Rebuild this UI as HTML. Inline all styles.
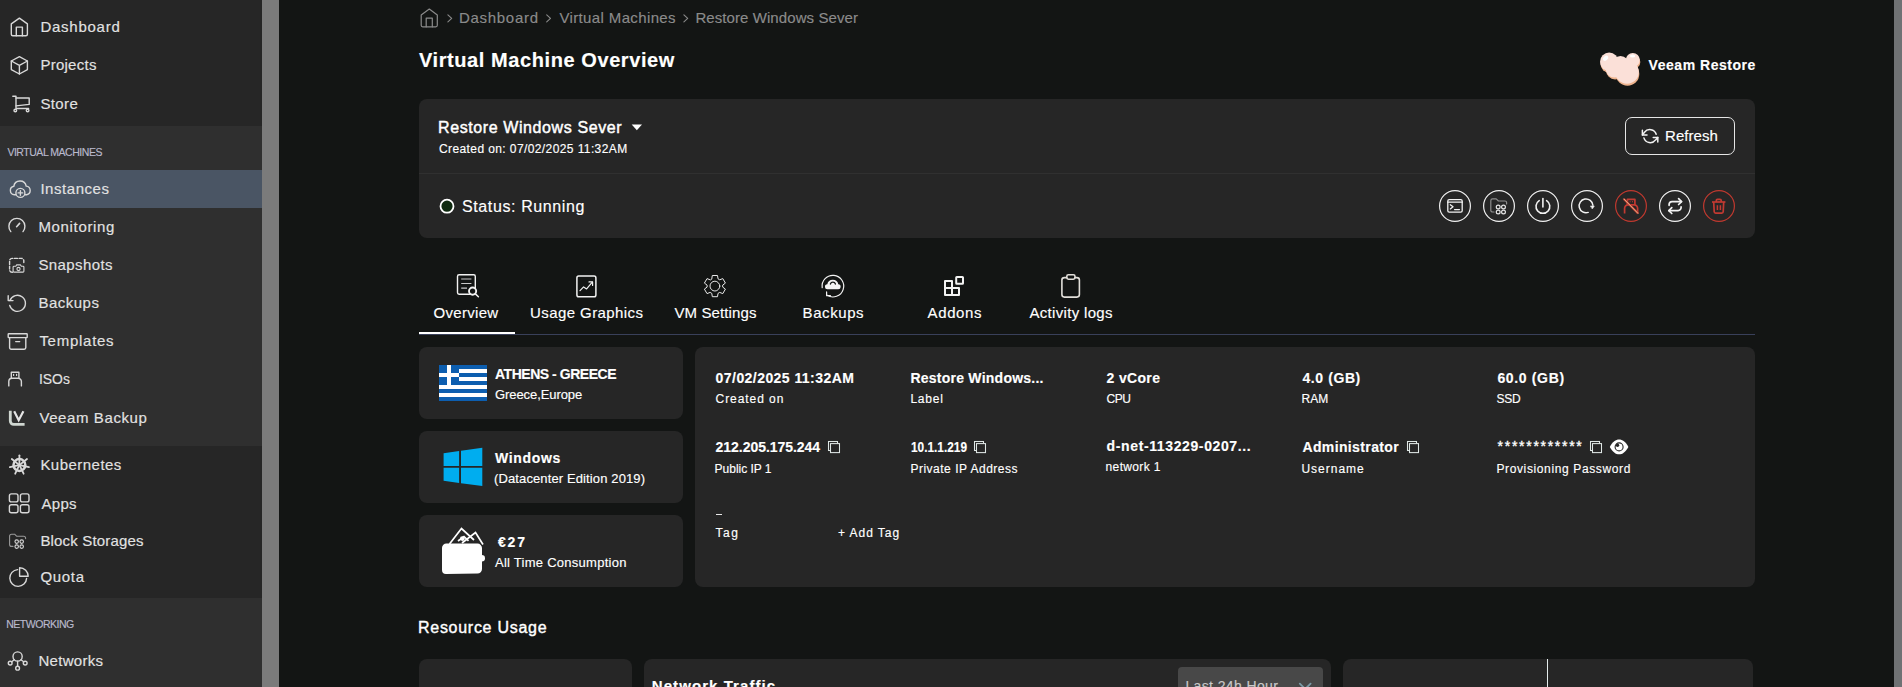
<!DOCTYPE html>
<html lang="en">
<head>
<meta charset="utf-8">
<title>Virtual Machine Overview</title>
<style>
html,body{margin:0;padding:0;background:#131514;}
body{width:1902px;height:687px;overflow:hidden;position:relative;font-family:"Liberation Sans", sans-serif;color:#fff;}
.a{position:absolute;display:block;margin:0;padding:0;}
.t{white-space:pre;font-weight:400;-webkit-text-stroke:0.15px currentColor;}
.i{fill:none;stroke:#d8d8d8;stroke-width:1.4;stroke-linecap:round;stroke-linejoin:round;overflow:visible;}
.f{overflow:visible;}

</style>
</head>
<body>
<aside>
<div class="a" style="left:0px;top:0px;width:262px;height:687px;background:#2f2f2f;"></div>
<div class="a" style="left:0px;top:0px;width:262px;height:126px;background:#262626;"></div>
<div class="a" style="left:0px;top:446px;width:262px;height:152px;background:#262626;"></div>
<div class="a" style="left:0px;top:170px;width:262px;height:38px;background:#4a5564;"></div>
<div class="a" style="left:262px;top:0px;width:17px;height:687px;background:#7b7b7b;"></div>
<svg class="a i" style="left:9px;top:16px" width="21" height="22" viewBox="9 16 21 22"><path d="M11.3 23.9 L19.4 18.1 L27.4 23.9 V34.3 a1.5 1.5 0 0 1 -1.5 1.5 H12.8 a1.5 1.5 0 0 1 -1.5 -1.5 Z"/><path d="M16.3 35.8 V27.1 H22.4 V35.8"/></svg>
<svg class="a i" style="left:9px;top:55px" width="21" height="21" viewBox="9 55 21 21"><path d="M19.4 56.6 L27.4 61 V69.6 L19.4 74 L11.3 69.6 V61 Z"/><path d="M11.3 61 L19.4 65.4 L27.4 61 M19.4 65.4 V74"/></svg>
<svg class="a i" style="left:11px;top:94px" width="21" height="20" viewBox="11 94 21 20"><path d="M12.8 96.3 H16 V108.5 H28.6"/><path d="M16 98 H29.2 V104.4 L16 105.9"/><circle cx="15.3" cy="110.5" r="1.3"/><circle cx="27.6" cy="110.5" r="1.3"/></svg>
<svg class="a i" style="left:8px;top:179px" width="25" height="21" viewBox="8 179 25 21"><path d="M15.6 194.8 H14.4 a4.3 4.3 0 0 1 -0.6 -8.5 a6.3 6.3 0 0 1 12.4 -0.2 a4.4 4.4 0 0 1 0.4 8.7 H25.2"/><circle cx="20.4" cy="192.9" r="4.5"/><path d="M20.4 190.6 V195.2 M18.1 192.9 H22.7"/></svg>
<svg class="a i" style="left:7px;top:218px" width="20" height="16" viewBox="7 218 20 16"><path d="M10.8 231.6 A8 8 0 1 1 23 231.6"/><path d="M16.6 226.7 L19.6 223.4" stroke-width="1.6"/></svg>
<svg class="a i" style="left:8px;top:256px" width="18" height="18" viewBox="8 256 18 18"><path d="M12.5 272.3 H12 a2.4 2.4 0 0 1 -2.4 -2.4 V260.8 a2.4 2.4 0 0 1 2.4 -2.4 H21.4 a2.4 2.4 0 0 1 2.4 2.4 V262.5" stroke-dasharray="3 1.7"/><path d="M14 266.2 H15.8 L16.7 264.9 H20.4 L21.3 266.2 H23 a0.9 0.9 0 0 1 0.9 0.9 V271.2 a0.9 0.9 0 0 1 -0.9 0.9 H14 a0.9 0.9 0 0 1 -0.9 -0.9 V267.1 a0.9 0.9 0 0 1 0.9 -0.9 Z" stroke-width="1.1"/><circle cx="18.5" cy="269" r="1.6" stroke-width="1.1"/></svg>
<svg class="a i" style="left:6px;top:294px" width="21" height="19" viewBox="6 294 21 19"><path d="M9.9 300.6 A8 8 0 1 1 9.7 305.4"/><path d="M8.2 295.8 V300.6 H13"/></svg>
<svg class="a i" style="left:6px;top:332px" width="23" height="19" viewBox="6 332 23 19"><rect x="8.2" y="333.7" width="19" height="3.9" rx="0.6"/><path d="M9.6 337.6 V347.6 a1.6 1.6 0 0 0 1.6 1.6 H24.2 a1.6 1.6 0 0 0 1.6 -1.6 V337.6"/><path d="M15.7 341.6 H19.7"/></svg>
<svg class="a i" style="left:7px;top:370px" width="17" height="18" viewBox="7 370 17 18"><path d="M8.8 385.9 V381.6 a3.3 3.3 0 0 1 3.3 -3.3 H18.1 a3.3 3.3 0 0 1 3.3 3.3 V385.9"/><path d="M11.3 378.3 V372.3 H18.9 V378.3"/><path d="M13.6 374.3 V375.5 M16.6 374.3 V375.5" stroke-width="1.2"/></svg>
<svg class="a i" style="left:8px;top:409px" width="18" height="18" viewBox="8 409 18 18"><path d="M10.3 410.7 V421 a3.4 3.4 0 0 0 3.4 3.4 H24.6" stroke="#cfd6d0" stroke-width="2.8" stroke-linecap="butt"/><path d="M14.2 411.2 L18.7 420.2 L23.4 411.2" stroke="#e6e6e6" stroke-width="2.2" stroke-linecap="butt" stroke-linejoin="miter"/></svg>
<svg class="a i" style="left:8px;top:454px" width="23" height="23" viewBox="8 454 23 23"><circle cx="19.4" cy="465" r="5.9" stroke-width="2.5"/><circle cx="19.4" cy="465" r="1.6" fill="#e0e0e0" stroke="none"/><path d="M19.4 463.5 L19.4 455.3" stroke-width="1.8"/><path d="M20.6 464.1 L27.0 459.0" stroke-width="1.8"/><path d="M20.9 465.3 L28.9 467.2" stroke-width="1.8"/><path d="M20.1 466.4 L23.6 473.7" stroke-width="1.8"/><path d="M18.7 466.4 L15.2 473.7" stroke-width="1.8"/><path d="M17.9 465.3 L9.9 467.2" stroke-width="1.8"/><path d="M18.2 464.1 L11.8 459.0" stroke-width="1.8"/></svg>
<svg class="a i" style="left:7px;top:492px" width="24" height="23" viewBox="7 492 24 23"><rect x="9.4" y="493.9" width="8.6" height="8" rx="2"/><rect x="9.4" y="504.7" width="8.6" height="8" rx="2"/><rect x="20.4" y="493.9" width="8.6" height="8" rx="2"/><rect x="20.4" y="504.7" width="8.6" height="8" rx="2"/></svg>
<svg class="a i" style="left:8px;top:532px" width="20" height="19" viewBox="8 532 20 19"><path d="M13 546.4 H11.6 a2 2 0 0 1 -2 -2 V536.2 a2 2 0 0 1 2 -2 H14.6 L16.8 536.3 H23.6 a2 2 0 0 1 2 2 V538.6" stroke="#9a9a9a" stroke-width="1.1"/><circle cx="16.7" cy="541.6" r="1.75" stroke-width="1.1"/><circle cx="16.7" cy="546.6" r="1.75" stroke-width="1.1"/><circle cx="21.7" cy="541.6" r="1.75" stroke-width="1.1"/><circle cx="21.7" cy="546.6" r="1.75" stroke-width="1.1"/></svg>
<svg class="a i" style="left:8px;top:566px" width="22" height="22" viewBox="8 566 22 22"><path d="M17.6 569.6 A8.4 8.4 0 1 0 26.6 578.4"/><path d="M19.6 567.7 A8.6 8.6 0 0 1 28.2 576.3 H19.6 Z"/></svg>
<svg class="a i" style="left:6px;top:650px" width="23" height="22" viewBox="6 650 23 22"><circle cx="17.6" cy="656.5" r="4.6"/><circle cx="10.2" cy="663.1" r="1.9"/><circle cx="25.2" cy="663.1" r="1.9"/><circle cx="17.6" cy="668.2" r="1.9"/><path d="M17.6 661.1 V666.3 M14.3 659.8 L11.7 661.8 M20.9 659.8 L23.7 661.8"/></svg>
<span class="a t" style="left:40.4px;top:19px;font-size:15px;line-height:15px;letter-spacing:0.75px;color:#e2e2e2;">Dashboard</span>
<span class="a t" style="left:40.4px;top:57.4px;font-size:15px;line-height:15px;letter-spacing:0.26px;color:#e2e2e2;">Projects</span>
<span class="a t" style="left:40.4px;top:96.2px;font-size:15px;line-height:15px;letter-spacing:0.4px;color:#e2e2e2;">Store</span>
<span class="a t" style="left:7.4px;top:147.4px;font-size:10.5px;line-height:10.5px;letter-spacing:-0.47px;color:#b9b9cc;">VIRTUAL MACHINES</span>
<span class="a t" style="left:40.4px;top:181.4px;font-size:15px;line-height:15px;letter-spacing:0.55px;color:#e2e2e2;">Instances</span>
<span class="a t" style="left:38.4px;top:219.4px;font-size:15px;line-height:15px;letter-spacing:0.67px;color:#e2e2e2;">Monitoring</span>
<span class="a t" style="left:38.4px;top:257.4px;font-size:15px;line-height:15px;letter-spacing:0.4px;color:#e2e2e2;">Snapshots</span>
<span class="a t" style="left:38.4px;top:295.4px;font-size:15px;line-height:15px;letter-spacing:0.5px;color:#e2e2e2;">Backups</span>
<span class="a t" style="left:39.4px;top:333.4px;font-size:15px;line-height:15px;letter-spacing:0.73px;color:#e2e2e2;">Templates</span>
<span class="a t" style="left:38.5px;top:371.4px;font-size:15px;line-height:15px;transform:scaleX(0.925);transform-origin:0 0;color:#e2e2e2;">ISOs</span>
<span class="a t" style="left:39.4px;top:410.2px;font-size:15px;line-height:15px;letter-spacing:0.6px;color:#e2e2e2;">Veeam Backup</span>
<span class="a t" style="left:40.4px;top:457.4px;font-size:15px;line-height:15px;letter-spacing:0.47px;color:#e2e2e2;">Kubernetes</span>
<span class="a t" style="left:41.4px;top:495.6px;font-size:15px;line-height:15px;letter-spacing:0.33px;color:#e2e2e2;">Apps</span>
<span class="a t" style="left:40.4px;top:533px;font-size:15px;line-height:15px;letter-spacing:0.17px;color:#e2e2e2;">Block Storages</span>
<span class="a t" style="left:40.4px;top:569.4px;font-size:15px;line-height:15px;letter-spacing:0.7px;color:#e2e2e2;">Quota</span>
<span class="a t" style="left:6.2px;top:619.4px;font-size:10.5px;line-height:10.5px;letter-spacing:-0.47px;color:#b9b9cc;">NETWORKING</span>
<span class="a t" style="left:38.4px;top:653px;font-size:15px;line-height:15px;letter-spacing:0.31px;color:#e2e2e2;">Networks</span>
</aside>
<main>
<div class="a" style="left:1894px;top:0px;width:8px;height:687px;background:#707274;"></div>
<div class="a" style="left:419px;top:99px;width:1336px;height:139px;background:#262626;border-radius:8px;"></div>
<div class="a" style="left:419px;top:173px;width:1336px;height:1px;background:#303030;"></div>
<div class="a" style="left:1625px;top:117px;width:110.3px;height:38.2px;border-radius:7px;border:1px solid #e6e6e6;box-sizing:border-box;"></div>
<div class="a" style="left:419px;top:334px;width:1336px;height:1px;background:#39405a;"></div>
<div class="a" style="left:419px;top:332px;width:96px;height:2.4px;background:#ffffff;"></div>
<div class="a" style="left:419px;top:347px;width:264.4px;height:72px;background:#262626;border-radius:8px;"></div>
<div class="a" style="left:419px;top:431px;width:264.4px;height:72px;background:#262626;border-radius:8px;"></div>
<div class="a" style="left:419px;top:515px;width:264.4px;height:72px;background:#262626;border-radius:8px;"></div>
<div class="a" style="left:695px;top:347px;width:1060px;height:240px;background:#262626;border-radius:8px;"></div>
<div class="a" style="left:716px;top:514px;width:5.5px;height:1.2px;background:#e8e8e8;"></div>
<div class="a" style="left:419px;top:659px;width:213px;height:40px;background:#262626;border-radius:8px;"></div>
<div class="a" style="left:644px;top:659px;width:687px;height:40px;background:#262626;border-radius:8px;"></div>
<div class="a" style="left:1343px;top:659px;width:410px;height:40px;background:#262626;border-radius:8px;"></div>
<div class="a" style="left:1547px;top:659px;width:1.2px;height:40px;background:#e4ecec;"></div>
<div class="a" style="left:1178px;top:667px;width:145px;height:40px;background:#484848;border-radius:4px;"></div>
<svg class="a f" style="left:438px;top:197px" width="18" height="18" viewBox="438 197 18 18"><circle cx="447" cy="206.2" r="6.5" fill="#0f2a10" stroke="#fff" stroke-width="1.8"/></svg>
<svg class="a f" style="left:1438px;top:189px" width="34" height="34" viewBox="1438 189 34 34"><circle cx="1455" cy="206" r="15.4" fill="none" stroke="#f0f0f0" stroke-width="1.2"/></svg>
<svg class="a f" style="left:1482px;top:189px" width="34" height="34" viewBox="1482 189 34 34"><circle cx="1499" cy="206" r="15.4" fill="none" stroke="#f0f0f0" stroke-width="1.2"/></svg>
<svg class="a f" style="left:1526px;top:189px" width="34" height="34" viewBox="1526 189 34 34"><circle cx="1543" cy="206" r="15.4" fill="none" stroke="#f0f0f0" stroke-width="1.2"/></svg>
<svg class="a f" style="left:1570px;top:189px" width="34" height="34" viewBox="1570 189 34 34"><circle cx="1587" cy="206" r="15.4" fill="none" stroke="#f0f0f0" stroke-width="1.2"/></svg>
<svg class="a f" style="left:1614px;top:189px" width="34" height="34" viewBox="1614 189 34 34"><circle cx="1631" cy="206" r="15.4" fill="none" stroke="#c0392f" stroke-width="1.2"/></svg>
<svg class="a f" style="left:1658px;top:189px" width="34" height="34" viewBox="1658 189 34 34"><circle cx="1675" cy="206" r="15.4" fill="none" stroke="#f0f0f0" stroke-width="1.2"/></svg>
<svg class="a f" style="left:1702px;top:189px" width="34" height="34" viewBox="1702 189 34 34"><circle cx="1719" cy="206" r="15.4" fill="none" stroke="#c0392f" stroke-width="1.2"/></svg>
<svg class="a i" style="left:419px;top:7px" width="21" height="22" viewBox="419 7 21 22"><g stroke="#8b8b8b" stroke-width="1.2"><path d="M421.2 14.9 L429.3 9.1 L437.3 14.9 V25.3 a1.5 1.5 0 0 1 -1.5 1.5 H422.7 a1.5 1.5 0 0 1 -1.5 -1.5 Z"/><path d="M426.2 26.8 V18.1 H432.3 V26.8"/></g></svg>
<svg class="a i" style="left:446px;top:13px" width="8" height="10" viewBox="446 13 8 10"><path d="M447.9 14.8 L451.7 18.3 L447.9 21.8" stroke="#8b8b8b" stroke-width="1.1"/></svg>
<svg class="a i" style="left:545px;top:13px" width="8" height="10" viewBox="545 13 8 10"><path d="M546.7 14.8 L550.5 18.3 L546.7 21.8" stroke="#8b8b8b" stroke-width="1.1"/></svg>
<svg class="a i" style="left:682px;top:13px" width="8" height="10" viewBox="682 13 8 10"><path d="M683.9 14.8 L687.6999999999999 18.3 L683.9 21.8" stroke="#8b8b8b" stroke-width="1.1"/></svg>
<svg class="a f" style="left:1598px;top:51px" width="44" height="36" viewBox="1598 51 44 36"><g stroke="none"><g fill="#efb48e"><circle cx="1609.7" cy="63.699999999999996" r="9.2"/><circle cx="1633.3" cy="61.9" r="7"/><circle cx="1627.5" cy="73.9" r="11.8"/><circle cx="1615.1" cy="70.5" r="9"/><circle cx="1621.0" cy="66.4" r="8.6"/></g><g fill="#fbe0d8"><circle cx="1609.2" cy="61.8" r="9.2"/><circle cx="1632.8" cy="60" r="7"/><circle cx="1627" cy="72" r="11.8"/><circle cx="1614.6" cy="68.6" r="9"/><circle cx="1620.5" cy="64.5" r="8.6"/></g><ellipse cx="1605.6" cy="58.2" rx="3" ry="2.1" fill="#fff" transform="rotate(-35 1605.6 58.2)"/><ellipse cx="1632.6" cy="56" rx="2.6" ry="1.6" fill="#fff"/></g></svg>
<svg class="a i" style="left:1640px;top:127px" width="20" height="18" viewBox="1640 127 20 18"><g stroke="#f2f2f2" stroke-width="1.5"><path d="M1656.2 134.3 A6.6 6.6 0 0 0 1644.5 132.3 L1642.4 135"/><path d="M1642.4 130.3 V135 H1647"/><path d="M1643.9 137.9 A6.6 6.6 0 0 0 1655.6 139.9 L1657.8 137.4"/><path d="M1657.8 142 V137.4 H1653.2"/></g></svg>
<svg class="a i" style="left:1446px;top:198px" width="18" height="16" viewBox="1446 198 18 16"><g stroke="#f2f2f2" stroke-width="1.3"><rect x="1447.8" y="199.6" width="14.4" height="12.6" rx="1.4"/><path d="M1447.8 202.2 H1462.2"/><path d="M1450.3 204.7 L1453 206.8 L1450.3 208.9"/><path d="M1454.6 209.6 H1459.4" stroke-width="1.4"/></g></svg>
<svg class="a i" style="left:1489px;top:197px" width="19" height="17" viewBox="1489 197 19 17"><path d="M1494 212 H1492.6 a1.8 1.8 0 0 1 -1.8 -1.8 V200.7 a1.8 1.8 0 0 1 1.8 -1.8 H1496.2 L1498.4 201 H1505 a1.6 1.6 0 0 1 1.6 1.6 V204" stroke="#8e8e8e" stroke-width="1.2"/><circle cx="1498.2" cy="207" r="1.9" stroke="#e6e6e6" stroke-width="1.2"/><circle cx="1498.2" cy="212" r="1.9" stroke="#e6e6e6" stroke-width="1.2"/><circle cx="1503.5" cy="207" r="1.9" stroke="#e6e6e6" stroke-width="1.2"/><circle cx="1503.5" cy="212" r="1.9" stroke="#e6e6e6" stroke-width="1.2"/></svg>
<svg class="a i" style="left:1534px;top:197px" width="18" height="18" viewBox="1534 197 18 18"><g stroke="#f2f2f2" stroke-width="1.6"><path d="M1542.9 198.6 V207"/><path d="M1539.2 200.6 A6.9 6.9 0 1 0 1546.6 200.6"/></g></svg>
<svg class="a i" style="left:1578px;top:197px" width="18" height="18" viewBox="1578 197 18 18"><g stroke="#f2f2f2" stroke-width="1.5"><path d="M1588.2 212.4 A6.9 6.9 0 1 1 1592.9 205.2"/><path d="M1590.7 206 H1594.3 L1592.5 208.7 Z" fill="#f2f2f2" stroke-width="0.6"/></g></svg>
<svg class="a i" style="left:1622px;top:197px" width="18" height="18" viewBox="1622 197 18 18"><g stroke="#c23a32" stroke-width="1.7" stroke-linecap="butt"><path d="M1624.6 213.6 V208.2 a3.4 3.4 0 0 1 3.4 -3.4 H1634.2 a3.4 3.4 0 0 1 3.4 3.4 V213.6"/><path d="M1627.4 204.8 V199.4 H1634.9 V204.8"/><path d="M1629.6 201.7 H1630.6 M1632 201.7 H1633" stroke-width="1.1"/><path d="M1623.6 198.7 L1638.2 213.6" stroke-width="2.2"/><path d="M1623.6 198.7 L1638.2 213.6" stroke="#ecd9a0" stroke-width="0.8"/></g></svg>
<svg class="a i" style="left:1667px;top:197px" width="17" height="18" viewBox="1667 197 17 18"><g stroke="#f2f2f2" stroke-width="1.7"><path d="M1669.1 205.3 V204.6 a3 3 0 0 1 3 -3 H1681.4"/><path d="M1678.6 198.7 L1681.6 201.6 L1678.6 204.5"/><path d="M1681.1 206.9 V207.6 a3 3 0 0 1 -3 3 H1669"/><path d="M1671.8 207.7 L1668.8 210.6 L1671.8 213.5"/></g></svg>
<svg class="a i" style="left:1710px;top:197px" width="18" height="18" viewBox="1710 197 18 18"><g stroke="#c23a32" stroke-width="1.7" stroke-linecap="butt"><path d="M1712 202 H1725.4"/><path d="M1716.3 202 V200.6 a1.2 1.2 0 0 1 1.2 -1.2 H1720 a1.2 1.2 0 0 1 1.2 1.2 V202"/><path d="M1713.7 202 L1714.2 211.8 a1.4 1.4 0 0 0 1.4 1.3 H1721.8 a1.4 1.4 0 0 0 1.4 -1.3 L1723.7 202"/><path d="M1717.4 205.2 V210 M1720.4 205.2 V210" stroke-width="1.5"/></g></svg>
<svg class="a i" style="left:455px;top:273px" width="26" height="26" viewBox="455 273 26 26"><g stroke="#f2f2f2"><rect x="457.5" y="274.8" width="17.8" height="19.4" rx="1.6" stroke-width="1.4"/><path d="M461.2 279 H471.4 M461.2 283.5 H471.4 M461.2 288.1 H467" stroke="#c8c8c8" stroke-width="1.2" stroke-linecap="butt"/><circle cx="472.6" cy="291.1" r="3.6" fill="#131514" stroke-width="1.9"/><path d="M475.4 293.9 L478.4 296.8" stroke-width="1.5"/></g></svg>
<svg class="a i" style="left:575px;top:274px" width="24" height="25" viewBox="575 274 24 25"><g stroke="#f2f2f2"><rect x="576.9" y="276.1" width="19" height="20.6" rx="1.8" stroke-width="1.5"/><path d="M580 290.6 L583.6 286.9 L586.6 288.9 L592.3 282.2" stroke-width="1.2"/><path d="M589 281.9 H592.6 V285.5" stroke-width="1.2"/></g></svg>
<svg class="a i" style="left:703px;top:274px" width="24" height="24" viewBox="703 274 24 24"><g stroke="#e8e8e8" stroke-width="1"><path d="M711.8 278.8 L712.3 275.5 L717.5 275.5 L718.0 278.8 L719.7 279.8 L722.8 278.6 L725.4 283.1 L722.7 285.1 L722.7 287.1 L725.4 289.1 L722.8 293.6 L719.7 292.4 L718.0 293.4 L717.5 296.7 L712.3 296.7 L711.8 293.4 L710.1 292.4 L707.0 293.6 L704.4 289.1 L707.1 287.1 L707.1 285.1 L704.4 283.1 L707.0 278.6 L710.1 279.8 Z" stroke-linejoin="round"/><circle cx="714.9" cy="286.1" r="4.9"/></g></svg>
<svg class="a i" style="left:820px;top:274px" width="26" height="25" viewBox="820 274 26 25"><g stroke="#f2f2f2" stroke-width="1.2"><path d="M822.2 287.6 A10.8 10.8 0 1 1 827.2 295.3"/><path d="M826.6 291.9 V295.7 H830.4" /><path d="M827.6 289.3 a2.5 2.5 0 0 1 -0.3 -5 a5.6 5.6 0 0 1 11 0 a2.5 2.5 0 0 1 -0.3 5 Z" fill="#f4f4f4" stroke="none"/><path d="M830.4 284 A2.6 2.6 0 0 1 835.4 284" stroke="#131514" stroke-width="1.3"/></g></svg>
<svg class="a i" style="left:943px;top:275px" width="23" height="23" viewBox="943 275 23 23"><g stroke="#f2f2f2" stroke-width="2" stroke-linejoin="round"><path d="M945 281 H952 V288 H959 V295 H945 Z M945 288 H952 V295"/><rect x="956.2" y="277" width="6.8" height="6.8" rx="0.6"/></g></svg>
<svg class="a i" style="left:1060px;top:273px" width="22" height="26" viewBox="1060 273 22 26"><g stroke="#e2dfda" stroke-width="1.6"><path d="M1066.6 277.6 H1064.4 a2.5 2.5 0 0 0 -2.5 2.5 V294.6 a2.5 2.5 0 0 0 2.5 2.5 H1076.9 a2.5 2.5 0 0 0 2.5 -2.5 V280.1 a2.5 2.5 0 0 0 -2.5 -2.5 H1075"/><rect x="1066.8" y="274.8" width="8.2" height="4.4" rx="1.6"/></g></svg>
<svg class="a f" style="left:439px;top:365px" width="48" height="36" viewBox="439 365 48 36"><g stroke="none"><rect x="439" y="365" width="48" height="36" fill="#0d5eaf"/><rect x="459" y="369" width="28" height="4" fill="#fff"/><rect x="459" y="377" width="28" height="4" fill="#fff"/><rect x="439" y="385" width="48" height="4" fill="#fff"/><rect x="439" y="393" width="48" height="4" fill="#fff"/><rect x="447" y="365" width="4" height="20" fill="#fff"/><rect x="439" y="373" width="20" height="4" fill="#fff"/></g></svg>
<svg class="a f" style="left:443px;top:447px" width="40" height="40" viewBox="443 447 40 40"><g fill="#00adef" stroke="none"><path d="M443.6 453.2 L459.1 451 V466 H443.6 Z"/><path d="M461 450.7 L482.3 447.7 V466 H461 Z"/><path d="M443.6 467.8 H459.1 V483 L443.6 480.8 Z"/><path d="M461 467.8 H482.3 V485.9 L461 483.2 Z"/></g></svg>
<svg class="a f" style="left:441px;top:527px" width="45" height="48" viewBox="441 527 45 48"><g stroke="#fff" stroke-width="1.7" fill="none"><path d="M449.5 544 L461.5 528.6 L474 540"/><path d="M462 543 L475.5 532.6 L483 544.5"/><circle cx="462.4" cy="538.6" r="1.6" fill="#fff"/><path d="M458 541 L464 536.5 L468.5 540.8"/></g><g fill="#fff" stroke="none"><path d="M446.5 543.6 H477.5 a4.5 4.5 0 0 1 4.5 4.5 V569 a4.5 4.5 0 0 1 -4.5 4.5 L446 573.9 a4 4 0 0 1 -4 -4 V548 a4.4 4.4 0 0 1 4.5 -4.4 Z"/><circle cx="481.8" cy="558.3" r="3.2"/></g></svg>
<svg class="a i" style="left:827px;top:440px" width="15" height="15" viewBox="827 440 15 15"><g stroke="#dfe7e5" stroke-width="1.05" stroke-linejoin="miter"><rect x="828.5" y="441.5" width="9" height="9"/><rect x="830.5" y="443.6" width="9" height="9" fill="#262626"/></g></svg>
<svg class="a i" style="left:973px;top:440px" width="15" height="15" viewBox="973 440 15 15"><g stroke="#dfe7e5" stroke-width="1.05" stroke-linejoin="miter"><rect x="974.5" y="441.5" width="9" height="9"/><rect x="976.5" y="443.6" width="9" height="9" fill="#262626"/></g></svg>
<svg class="a i" style="left:1406px;top:440px" width="15" height="15" viewBox="1406 440 15 15"><g stroke="#dfe7e5" stroke-width="1.05" stroke-linejoin="miter"><rect x="1407.5" y="441.5" width="9" height="9"/><rect x="1409.5" y="443.6" width="9" height="9" fill="#262626"/></g></svg>
<svg class="a i" style="left:1589px;top:440px" width="15" height="15" viewBox="1589 440 15 15"><g stroke="#dfe7e5" stroke-width="1.05" stroke-linejoin="miter"><rect x="1590.5" y="441.5" width="9" height="9"/><rect x="1592.5" y="443.6" width="9" height="9" fill="#262626"/></g></svg>
<svg class="a f" style="left:1609px;top:439px" width="21" height="16" viewBox="1609 439 21 16"><g stroke="none"><path d="M1609.8 446.9 C1612.6 441.8 1615.8 439.5 1619.1 439.5 C1622.4 439.5 1625.6 441.8 1628.4 446.9 C1625.6 452 1622.4 454.3 1619.1 454.3 C1615.8 454.3 1612.6 452 1609.8 446.9 Z" fill="#fff"/><circle cx="1619.1" cy="446.9" r="4" fill="none" stroke="#262626" stroke-width="1.1"/><circle cx="1617.5" cy="445.2" r="1.7" fill="#262626"/></g></svg>
<svg class="a i" style="left:1298px;top:681px" width="15" height="8" viewBox="1298 681 15 8"><path d="M1299.8 683.6 L1305.2 689 L1310.6 683.6" stroke="#7b9aa6" stroke-width="1.8"/></svg>
<svg class="a f" style="left:631px;top:124px" width="12" height="7" viewBox="631 124 12 7"><path d="M631.7 124.5 H642 L636.85 130.3 Z" fill="#fff" stroke="none"/></svg>
<span class="a t" style="left:459px;top:10px;font-size:15px;line-height:15px;letter-spacing:0.7px;color:#8b8b8b;">Dashboard</span>
<span class="a t" style="left:559.4px;top:10px;font-size:15px;line-height:15px;letter-spacing:0.37px;color:#8b8b8b;">Virtual Machines</span>
<span class="a t" style="left:695.4px;top:10px;font-size:15px;line-height:15px;letter-spacing:0.08px;color:#8b8b8b;">Restore Windows Sever</span>
<h1 class="a t" style="left:419px;top:50px;font-size:20px;line-height:20px;font-weight:700;letter-spacing:0.58px;">Virtual Machine Overview</h1>
<span class="a t" style="left:1648.6px;top:58px;font-size:14px;line-height:14px;font-weight:700;letter-spacing:0.53px;">Veeam Restore</span>
<span class="a t" style="left:438px;top:120px;font-size:16px;line-height:16px;letter-spacing:0.6px;-webkit-text-stroke:0.45px currentColor;">Restore Windows Sever</span>
<span class="a t" style="left:439px;top:143px;font-size:12px;line-height:12px;letter-spacing:0.4px;">Created on: 07/02/2025 11:32AM</span>
<span class="a t" style="left:1665px;top:128px;font-size:15px;line-height:15px;letter-spacing:0.07px;">Refresh</span>
<span class="a t" style="left:462px;top:199.4px;font-size:16px;line-height:16px;letter-spacing:0.61px;">Status: Running</span>
<span class="a t" style="left:433.6px;top:305px;font-size:15px;line-height:15px;letter-spacing:0.29px;">Overview</span>
<span class="a t" style="left:530px;top:305px;font-size:15px;line-height:15px;letter-spacing:0.42px;">Usage Graphics</span>
<span class="a t" style="left:674.4px;top:305px;font-size:15px;line-height:15px;letter-spacing:0.12px;">VM Settings</span>
<span class="a t" style="left:802.6px;top:305px;font-size:15px;line-height:15px;letter-spacing:0.57px;">Backups</span>
<span class="a t" style="left:927.6px;top:305px;font-size:15px;line-height:15px;letter-spacing:0.6px;">Addons</span>
<span class="a t" style="left:1029.4px;top:305px;font-size:15px;line-height:15px;letter-spacing:0.33px;">Activity logs</span>
<span class="a t" style="left:495px;top:367px;font-size:14px;line-height:14px;font-weight:700;letter-spacing:-0.47px;">ATHENS - GREECE</span>
<span class="a t" style="left:495px;top:388.4px;font-size:13px;line-height:13px;letter-spacing:-0.08px;">Greece,Europe</span>
<span class="a t" style="left:495px;top:451px;font-size:14px;line-height:14px;font-weight:700;letter-spacing:0.67px;">Windows</span>
<span class="a t" style="left:494px;top:472px;font-size:13px;line-height:13px;letter-spacing:0.12px;">(Datacenter Edition 2019)</span>
<span class="a t" style="left:498px;top:535px;font-size:14px;line-height:14px;font-weight:700;letter-spacing:1.8px;">€27</span>
<span class="a t" style="left:495px;top:556px;font-size:13px;line-height:13px;letter-spacing:0.26px;">All Time Consumption</span>
<span class="a t" style="left:715.6px;top:371.4px;font-size:14px;line-height:14px;font-weight:700;letter-spacing:0.44px;">07/02/2025 11:32AM</span>
<span class="a t" style="left:715.6px;top:393px;font-size:12px;line-height:12px;letter-spacing:0.93px;">Created on</span>
<span class="a t" style="left:910.4px;top:371.4px;font-size:14px;line-height:14px;font-weight:700;letter-spacing:0.24px;">Restore Windows...</span>
<span class="a t" style="left:910.4px;top:393px;font-size:12px;line-height:12px;letter-spacing:0.8px;">Label</span>
<span class="a t" style="left:1106.6px;top:371.4px;font-size:14px;line-height:14px;font-weight:700;letter-spacing:0.33px;">2 vCore</span>
<span class="a t" style="left:1106.6px;top:393px;font-size:12px;line-height:12px;letter-spacing:-0.5px;">CPU</span>
<span class="a t" style="left:1302.4px;top:371.4px;font-size:14px;line-height:14px;font-weight:700;letter-spacing:0.6px;">4.0 (GB)</span>
<span class="a t" style="left:1301.4px;top:393px;font-size:12px;line-height:12px;letter-spacing:0.1px;">RAM</span>
<span class="a t" style="left:1497.4px;top:371.4px;font-size:14px;line-height:14px;font-weight:700;letter-spacing:0.65px;">60.0 (GB)</span>
<span class="a t" style="left:1496.4px;top:393px;font-size:12px;line-height:12px;letter-spacing:-0.2px;">SSD</span>
<span class="a t" style="left:715.6px;top:440px;font-size:14px;line-height:14px;font-weight:700;letter-spacing:-0.04px;">212.205.175.244</span>
<span class="a t" style="left:714.6px;top:463.2px;font-size:12px;line-height:12px;letter-spacing:-0.02px;">Public IP 1</span>
<span class="a t" style="left:910.6px;top:440px;font-size:14px;line-height:14px;font-weight:700;transform:scaleX(0.846);transform-origin:0 0;">10.1.1.219</span>
<span class="a t" style="left:910.4px;top:463.2px;font-size:12px;line-height:12px;letter-spacing:0.51px;">Private IP Address</span>
<span class="a t" style="left:1106.6px;top:439px;font-size:14px;line-height:14px;font-weight:700;letter-spacing:0.62px;">d-net-113229-0207...</span>
<span class="a t" style="left:1105.6px;top:461px;font-size:12px;line-height:12px;letter-spacing:0.35px;">network 1</span>
<span class="a t" style="left:1302.4px;top:440px;font-size:14px;line-height:14px;font-weight:700;letter-spacing:0.38px;">Administrator</span>
<span class="a t" style="left:1301.4px;top:463.2px;font-size:12px;line-height:12px;letter-spacing:1.0px;">Username</span>
<span class="a t" style="left:1497.6px;top:439.2px;font-size:14px;line-height:14px;letter-spacing:1.71px;-webkit-text-stroke:0.35px currentColor;">************</span>
<span class="a t" style="left:1496.4px;top:463.2px;font-size:12px;line-height:12px;letter-spacing:0.63px;">Provisioning Password</span>
<span class="a t" style="left:715.6px;top:527.4px;font-size:12px;line-height:12px;letter-spacing:1.5px;">Tag</span>
<span class="a t" style="left:838px;top:527.4px;font-size:12px;line-height:12px;letter-spacing:0.95px;">+ Add Tag</span>
<span class="a t" style="left:418px;top:620px;font-size:16px;line-height:16px;letter-spacing:0.72px;-webkit-text-stroke:0.4px currentColor;">Resource Usage</span>
<span class="a t" style="left:651.8px;top:678px;font-size:15px;line-height:15px;font-weight:700;letter-spacing:1.07px;">Network Traffic</span>
<span class="a t" style="left:1185.4px;top:678.6px;font-size:14px;line-height:14px;letter-spacing:0.38px;color:#c9c9c9;">Last 24h Hour</span>
</main>
</body>
</html>
